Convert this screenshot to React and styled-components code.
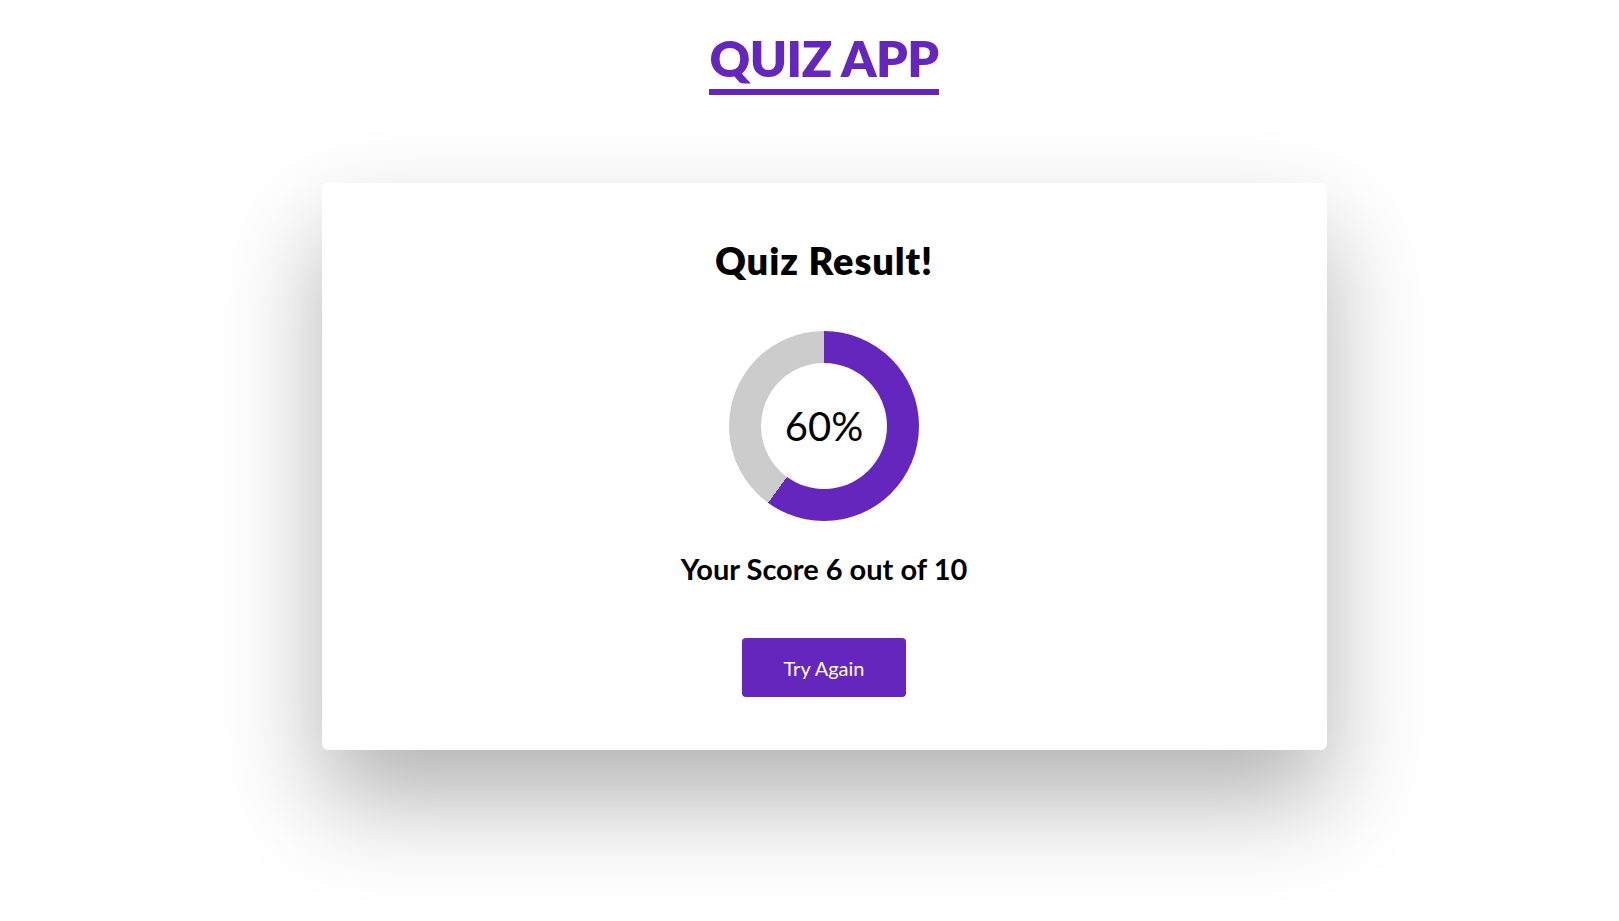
import React from 'react';
import styled, { createGlobalStyle } from 'styled-components';

const PURPLE = '#6526be';

const GlobalStyle = createGlobalStyle`
  body {
    margin: 0;
    background: #fff;
    font-family: Lato, "Open Sans", sans-serif;
    color: #000;
  }
`;

const Page = styled.div`
  min-height: 100vh;
  box-sizing: border-box;
  display: flex;
  flex-direction: column;
  align-items: center;
  padding: 31px 0 0 29px;
`;

const Title = styled.h1`
  margin: 0;
  font-size: 50px;
  line-height: 54px;
  font-weight: 800;
  color: ${PURPLE};
  border-bottom: 6px solid ${PURPLE};
  padding-bottom: 4px;
  letter-spacing: -0.5px;
`;

const Card = styled.div`
  margin-top: 88px;
  width: 1005px;
  height: 567px;
  box-sizing: border-box;
  background: #fff;
  border-radius: 6px;
  box-shadow: 0 50px 100px rgba(0, 0, 0, 0.3);
  display: flex;
  flex-direction: column;
  align-items: center;
  padding-top: 56px;
`;

const Heading = styled.h2`
  margin: 0;
  font-size: 38px;
  line-height: 42px;
  font-weight: 800;
  letter-spacing: 0.9px;
`;

const Donut = styled.div`
  margin-top: 50px;
  width: 190px;
  height: 190px;
  border-radius: 50%;
  background: conic-gradient(${PURPLE} 0 ${(p) => p.$pct}%, #cccccc ${(p) => p.$pct}% 100%);
  display: flex;
  align-items: center;
  justify-content: center;
`;

const DonutHole = styled.div`
  width: 126px;
  height: 126px;
  border-radius: 50%;
  background: #fff;
  display: flex;
  align-items: center;
  justify-content: center;
  font-size: 40px;
  font-weight: 400;
`;

const Score = styled.p`
  margin: 31px 0 0;
  font-size: 29px;
  line-height: 34px;
  font-weight: 700;
`;

const Button = styled.button`
  margin-top: 52px;
  width: 164px;
  height: 59px;
  border: none;
  border-radius: 4px;
  background: ${PURPLE};
  color: #fff;
  font-family: inherit;
  font-size: 20px;
  cursor: pointer;
`;

const App = () => {
  const score = 6;
  const total = 10;
  const pct = Math.round((score / total) * 100);

  return (
    <Page>
      <GlobalStyle />
      <Title>QUIZ APP</Title>
      <Card>
        <Heading>Quiz Result!</Heading>
        <Donut $pct={pct}>
          <DonutHole>{pct}%</DonutHole>
        </Donut>
        <Score>Your Score {score} out of {total}</Score>
        <Button>Try Again</Button>
      </Card>
    </Page>
  );
};

export default App;
